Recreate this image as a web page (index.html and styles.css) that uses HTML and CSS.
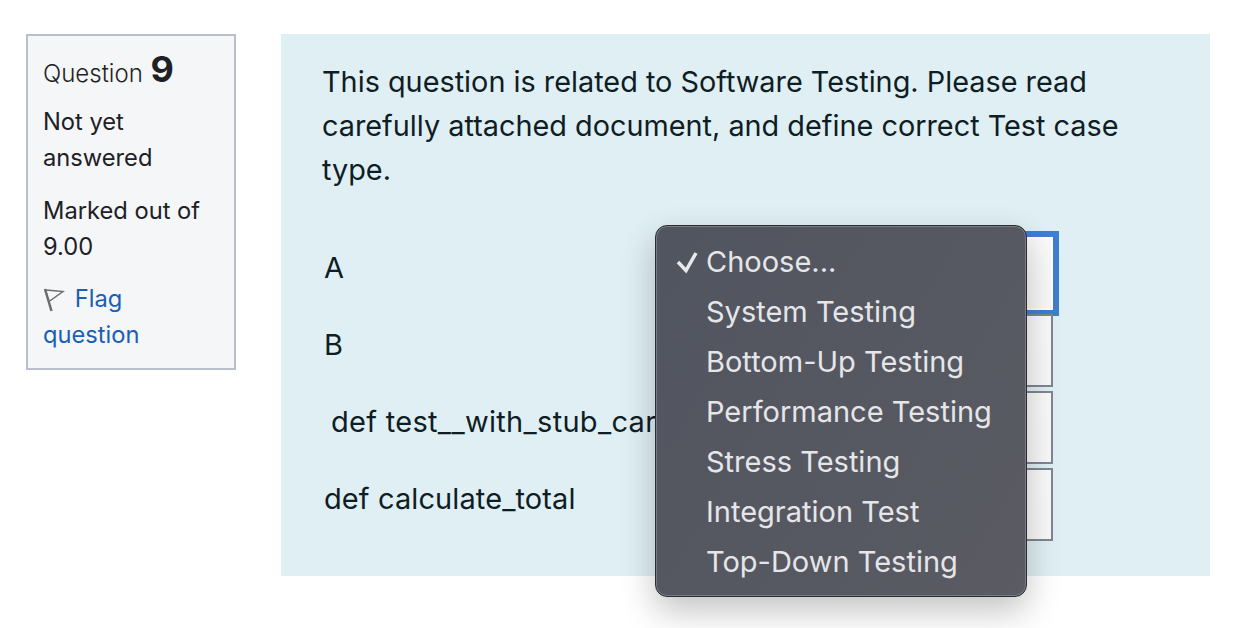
FILE: index.html
```html
<!DOCTYPE html>
<html lang="en">
<head>
    <meta charset="UTF-8">
    <meta name="viewport" content="width=device-width, initial-scale=1.0">
    <title>Question 9</title>
    <link rel="stylesheet" href="styles.css">
</head>
<body>

<div class="info">
    <h3 class="info-title">Question <span class="qno">9</span></h3>
    <p class="info-text">Not yet answered</p>
    <p class="info-text">Marked out of 9.00</p>
    <p class="info-flag">
        <svg class="flag-icon" width="22" height="24" viewBox="0 0 22 24">
            <path d="M2 1 L8.500 23" fill="none" stroke="#6a6d70" stroke-width="2.500"/>
            <path d="M3 2 L20 3.500 L6 13.500" fill="none" stroke="#6a6d70" stroke-width="1.500"/>
        </svg>
        <a href="#">Flag question</a>
    </p>
</div>

<div class="content">
    <p class="question">This question is related to Software Testing. Please read carefully attached document, and define correct Test case type.</p>

    <div class="row">
        <span class="label">A</span>
        <div class="select focused"></div>
    </div>
    <div class="row">
        <span class="label">B</span>
        <div class="select"></div>
    </div>
    <div class="row">
        <span class="label indented">def test__with_stub_cart</span>
        <div class="select"></div>
    </div>
    <div class="row">
        <span class="label">def calculate_total</span>
        <div class="select"></div>
    </div>

    <ul class="menu">
        <li>
            <svg class="check" width="22" height="22" viewBox="0 0 22 22">
                <path d="M2 10 L10 18.500 L20 1" fill="none" stroke="#e8e8ea" stroke-width="3.500"/>
            </svg>
            Choose...
        </li>
        <li>System Testing</li>
        <li>Bottom-Up Testing</li>
        <li>Performance Testing</li>
        <li>Stress Testing</li>
        <li>Integration Test</li>
        <li>Top-Down Testing</li>
    </ul>
</div>

</body>
</html>
```
FILE: styles.css
```css
html, body {
    height: 100%;
    overflow: hidden;
}

body {
    margin: 0;
    padding: 34px 34px 0 26px;
    box-sizing: border-box;
    display: flex;
    align-items: flex-start;
    gap: 45px;
    font-family: Inter, "Liberation Sans", sans-serif;
    color: #1d2125;
    background-color: #fff;
}

.info {
    width: 210px;
    box-sizing: border-box;
    padding: 14px 15px 15px 15px;
    border: 2px solid #b9bfcc;
    background-color: #f5f6f8;
    font-size: 23.700px;
    line-height: 36px;
}

.info-title {
    margin: 0 0 11px 0;
    font-size: 24px;
    font-weight: 300;
    line-height: 38px;
}

.qno {
    margin-left: 1px;
    font-size: 36px;
    font-weight: 700;
}

.info-text {
    margin: 0 0 17px 0;
}

.info-text + .info-text {
    margin-bottom: 16px;
}

.info-flag {
    margin: 0;
}

.info-flag a {
    color: #1a5fb4;
    text-decoration: none;
}

.flag-icon {
    margin-right: 3px;
    vertical-align: -5px;
}

.content {
    position: relative;
    width: 929px;
    box-sizing: border-box;
    padding: 26px 41px 35px 41px;
    background-color: #e0eff4;
    font-size: 28.830px;
    line-height: 44px;
    color: #0f1d24;
}

.question {
    margin: 0 0 45px 0;
}

.row {
    display: flex;
    align-items: center;
    justify-content: space-between;
    height: 73px;
    margin-top: 4px;
}

.label {
    padding-left: 2px;
    margin-bottom: 11px;
    font-size: 29px;
    letter-spacing: 0.100px;
}

.indented {
    padding-left: 9px;
    letter-spacing: 0.300px;
}

.select {
    width: 360px;
    height: 73px;
    margin-right: 116px;
    box-sizing: border-box;
    border: 2px solid #7f8692;
    background: linear-gradient(135deg, #fff, #f9f9f9);
}

.focused {
    border-color: #fff;
    box-shadow: 0 0 0 6px #3f7fcf;
}

.menu {
    position: absolute;
    left: 374px;
    top: 191px;
    width: 372px;
    height: 372px;
    margin: 0;
    padding: 11px 0 0 0;
    box-sizing: border-box;
    list-style: none;
    border: 1px solid #2c2d31;
    border-radius: 12px;
    background: linear-gradient(120deg, #51555f, #5a5b63);
    box-shadow: inset 0 0 0 1px #7a7c83, 0 14px 34px rgba(0, 0, 0, 0.24);
    color: #e6e6e9;
    font-size: 29px;
    line-height: 50px;
}

.menu li {
    position: relative;
    padding-left: 50px;
}

.check {
    position: absolute;
    left: 20px;
    top: 15px;
}
```
